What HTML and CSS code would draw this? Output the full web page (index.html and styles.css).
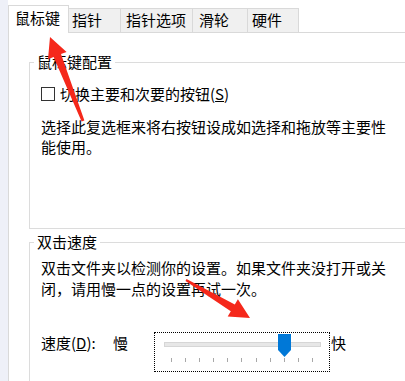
FILE: index.html
```html
<!DOCTYPE html>
<html lang="zh-CN">
<head>
<meta charset="utf-8">
<title>鼠标属性</title>
<link rel="stylesheet" href="styles.css">
</head>
<body>
<div class="page">
  <div class="strip"></div>
  <div class="main">
    <div class="tabs">
      <div class="tab active t1">鼠标键</div>
      <div class="tab t2">指针</div>
      <div class="tab t3">指针选项</div>
      <div class="tab t4">滑轮</div>
      <div class="tab t5">硬件</div>
      <div class="tab-fill"></div>
    </div>
    <div class="panel">
      <fieldset class="group g1">
        <legend>鼠标键配置</legend>
        <label class="check"><span class="box"></span><span>切换主要和次要的按钮(<u>S</u>)</span></label>
        <p class="desc d1">选择此复选框来将右按钮设成如选择和拖放等主要性能使用。</p>
      </fieldset>
      <fieldset class="group g2">
        <legend>双击速度</legend>
        <p class="desc d2">双击文件夹以检测你的设置。如果文件夹没打开或关闭，请用慢一点的设置再试一次。</p>
        <div class="speed">
          <span class="lbl">速度(<u>D</u>):</span>
          <span class="slow">慢</span>
          <div class="slider">
            <div class="track"></div>
            <div class="ticks"><i></i><i></i><i></i><i></i><i></i><i></i><i></i><i></i><i></i><i></i><i></i></div>
            <div class="thumb"></div>
          </div>
          <span class="fast">快</span>
        </div>
      </fieldset>
    </div>
  </div>
  <svg class="arrows" width="405" height="381" viewBox="0 0 405 381">
    <polygon points="84.4,120.5 61.0,54.1 66.6,51.9 50,37 48.0,59.3 53.6,57.1 81.6,121.5"/>
    <polygon points="186.5,279.1 234.8,304.4 237.9,299.2 250,318 227.7,316.4 230.8,311.2 185.5,280.9"/>
  </svg>
</div>
</body>
</html>
```

FILE: styles.css
```css
html, body {
  margin: 0;
  background: #fff;
}
body {
  font-family: "Noto Sans CJK SC", sans-serif;
  font-size: 15px;
  color: #000;
  width: 405px;
  height: 381px;
  overflow: hidden;
}
.page {
  position: relative;
  display: flex;
  height: 381px;
  overflow: hidden;
}
.strip {
  width: 8px;
  flex: none;
  background: #eef0f8;
}
.main {
  flex: 1;
  min-width: 0;
}
.tabs {
  display: flex;
  align-items: flex-end;
  height: 33px;
}
.tab {
  box-sizing: border-box;
  height: 25px;
  padding-top: 1px;
  line-height: 20px;
  white-space: nowrap;
  background: #f0f0f0;
  border-top: 1px solid #d9d9d9;
  border-right: 1px solid #d9d9d9;
  border-bottom: 1px solid #d9d9d9;
}
.tab.active {
  height: 28px;
  padding-top: 2px;
  background: #fff;
  border: 1px solid #d9d9d9;
  border-bottom: none;
}
.t1 { width: 61px; padding-left: 6px; }
.t2 { width: 52px; padding-left: 3px; }
.t3 { width: 72px; padding-left: 5px; }
.t4 { width: 55px; padding-left: 6px; }
.t5 { width: 51px; padding-left: 4px; }
.tab-fill {
  flex: 1;
  height: 0;
  border-bottom: 1px solid #d9d9d9;
}
.panel {
  box-sizing: border-box;
  height: 348px;
  border-left: 1px solid #d9d9d9;
  padding: 19px 0 0 20px;
}
.group {
  margin: 0 -40px 0 0;
  padding: 0 0 0 11px;
  border: 1px solid #dcdcdc;
  min-width: 0;
  box-sizing: border-box;
}
.group legend {
  padding: 0 3px;
  margin-left: -7px;
  line-height: 20px;
}
.g1 {
  height: 177px;
}
.g2 {
  margin-top: 3px;
  height: 160px;
}
.check {
  display: flex;
  align-items: center;
  margin-top: 12px;
  line-height: 20px;
}
.box {
  width: 14px;
  height: 14px;
  box-sizing: border-box;
  border: 1px solid #333;
  margin-right: 5px;
  flex: none;
}
.desc {
  margin: 0;
  width: 350px;
}
.d1 {
  margin-top: 13px;
  line-height: 20px;
}
.d2 {
  margin-top: 5px;
  line-height: 21px;
}
.speed {
  display: flex;
  align-items: flex-start;
  margin-top: 33px;
}
.lbl {
  width: 72px;
  line-height: 20px;
  margin-top: 1px;
}
.slow {
  width: 41px;
  line-height: 20px;
  margin-top: 1px;
}
.slider {
  position: relative;
  box-sizing: border-box;
  width: 176px;
  height: 40px;
  border: 1px dotted #000;
}
.track {
  box-sizing: border-box;
  width: 157px;
  height: 5px;
  margin: 9px 0 0 9px;
  border: 1px solid #d6d6d6;
  background: #e7e7e7;
}
.ticks {
  display: flex;
  justify-content: space-between;
  width: 142px;
  margin: 11px 0 0 16px;
}
.ticks i {
  width: 1px;
  height: 4px;
  background: #a8a8a8;
}
.thumb {
  position: absolute;
  left: 123px;
  top: 1px;
  width: 13px;
  height: 23px;
  background: #0078d7;
  clip-path: polygon(0 0, 100% 0, 100% 16px, 50% 100%, 0 16px);
}
.fast {
  margin-left: 1px;
  margin-top: 1px;
  line-height: 20px;
}
.arrows {
  position: absolute;
  left: 0;
  top: 0;
  pointer-events: none;
}
.arrows polygon {
  fill: #f5281b;
}
```
